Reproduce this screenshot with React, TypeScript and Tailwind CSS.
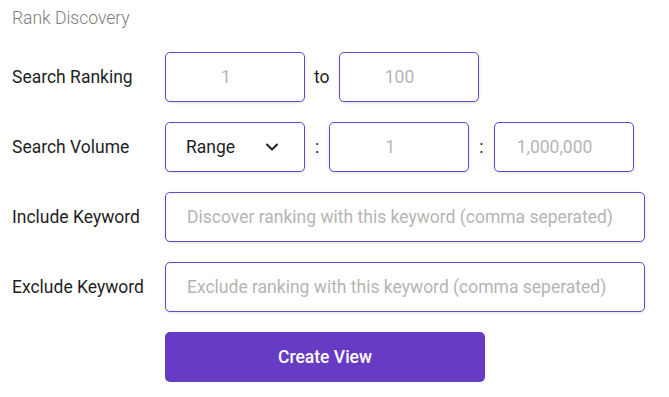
import { ChevronDown } from 'lucide-react';

const boxCls =
  'h-[50px] w-[140px] rounded-[5px] border border-[#6a42d4] bg-white shadow-[0_1px_3px_rgba(0,0,0,0.12)] text-[17.5px] outline-none placeholder:text-[#b5b5b5]';

const numCls = `${boxCls} text-center pr-[18px]`;

const Label = ({ children }: { children: string }) => (
  <div className="w-[153px] shrink-0 text-[17.5px] text-[#1f1f1f]">{children}</div>
);

export default function App() {
  return (
    <div
      className="w-[669px] h-[397px] bg-white pl-3 pt-[7px]"
      style={{ fontFamily: 'Roboto, "Noto Sans", sans-serif' }}
    >
      <div className="text-[17.5px] font-light leading-[22px] text-[#7d7d7d]">Rank Discovery</div>

      <div className="mt-[23px] flex flex-col gap-5">
        <div className="flex items-center">
          <Label>Search Ranking</Label>
          <div className="flex items-center gap-[9px]">
            <input className={numCls} placeholder="1" />
            <span className="text-[17.5px] text-[#1f1f1f]">to</span>
            <input className={numCls} placeholder="100" />
          </div>
        </div>

        <div className="flex items-center">
          <Label>Search Volume</Label>
          <div className="flex items-center gap-[10px]">
            <div className={`${boxCls} flex items-center justify-between pl-5 pr-[22px] text-[#1f1f1f]`}>
              <span>Range</span>
              <ChevronDown className="h-5 w-5" strokeWidth={2.4} />
            </div>
            <span className="text-[17.5px] text-[#1f1f1f]">:</span>
            <input className={numCls} placeholder="1" />
            <span className="text-[17.5px] text-[#1f1f1f]">:</span>
            <input className={numCls} placeholder="1,000,000" />
          </div>
        </div>

        <div className="flex items-center">
          <Label>Include Keyword</Label>
          <input
            className={`${boxCls} w-[480px] pl-[21px]`}
            placeholder="Discover ranking with this keyword (comma seperated)"
          />
        </div>

        <div className="flex items-center">
          <Label>Exclude Keyword</Label>
          <input
            className={`${boxCls} w-[480px] pl-[21px]`}
            placeholder="Exclude ranking with this keyword (comma seperated)"
          />
        </div>

        <div className="flex">
          <div className="w-[153px] shrink-0" />
          <button className="h-[50px] w-[320px] rounded-[5px] bg-[#683bc5] text-[17.5px] font-medium text-white">
            Create View
          </button>
        </div>
      </div>
    </div>
  );
}
